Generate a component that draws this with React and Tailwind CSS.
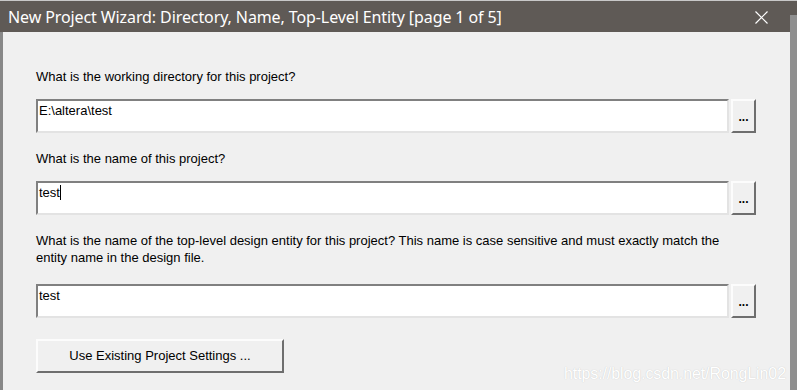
import React from 'react';

const FIELDS = [
  { label: 'What is the working directory for this project?', value: 'E:\\altera\\test' },
  { label: 'What is the name of this project?', value: 'test', caret: true },
  {
    label:
      'What is the name of the top-level design entity for this project? This name is case sensitive and must exactly match the entity name in the design file.',
    value: 'test',
    tall: true,
  },
];

function Field({ label, value, caret, tall }) {
  return (
    <div className="flex flex-col">
      <p className="w-[706px] text-[13px] leading-[17px] text-black">{label}</p>
      <div className={`${tall ? 'mt-[18px]' : 'mt-[14px]'} flex gap-[2px]`}>
        <div className="w-[693px] h-[34px] bg-white border-2 border-t-[#808080] border-l-[#808080] border-b-[#e3e3e3] border-r-[#e3e3e3] px-[1px] pt-[2px] text-[13px] leading-[15px] text-black">
          {value}
          {caret && <span className="inline-block w-px h-[15px] bg-black align-[-3px]" />}
        </div>
        <button className="w-[25px] h-[34px] bg-[#f0f0f0] border-2 border-t-[#fcfcfc] border-l-[#fcfcfc] border-b-[#6e6e6e] border-r-[#6e6e6e] text-[12px] font-bold leading-none text-black pt-[2px]">
          ...
        </button>
      </div>
    </div>
  );
}

export default function App() {
  return (
    <div className="w-[797px] h-[390px] overflow-hidden bg-[#9d9d9d] relative" style={{ fontFamily: '"Liberation Sans", Arial, sans-serif' }}>
      <div className="h-px bg-[#c8c8c8]" />
      <div className="flex h-[389px]">
        <div className="w-[790px] flex flex-col">
          <div className="h-[31px] bg-[#5f5a56] flex items-center justify-between pl-[8px] pr-[22px]">
            <span className="text-white text-[16px] tracking-[-0.1px]" style={{ fontFamily: '"Noto Sans", sans-serif' }}>
              New Project Wizard: Directory, Name, Top-Level Entity [page 1 of 5]
            </span>
            <svg width="13" height="13" viewBox="0 0 13 13" className="mt-[1px]">
              <path d="M0.5 0.5 L12.5 12.5 M12.5 0.5 L0.5 12.5" stroke="#ffffff" strokeWidth="1.2" fill="none" />
            </svg>
          </div>
          <div className="flex flex-1">
            <div className="w-[3px] bg-[#888888]" />
            <div className="flex-1 bg-[#f0f0f0] pl-[33px] pt-[36px] flex flex-col gap-[17px]">
              {FIELDS.map((f) => (
                <Field key={f.label} {...f} />
              ))}
              <button className="w-[248px] h-[34px] bg-[#f0f0f0] border-2 border-t-[#fcfcfc] border-l-[#fcfcfc] border-b-[#6e6e6e] border-r-[#6e6e6e] text-[13px] text-black mt-[4px]">
                Use Existing Project Settings ...
              </button>
            </div>
          </div>
        </div>
        <div className="flex-1 flex flex-col">
          <div className="h-[14px] bg-[#5f5a56]" />
          <div className="flex-1 bg-[#8f8f8f]" />
        </div>
      </div>
      <span className="absolute left-[564px] top-[362px] text-[16px] text-white tracking-[-0.1px]" style={{ textShadow: '0 0 1px #bfbfbf' }}>
        https://blog.csdn.net/RongLin02
      </span>
    </div>
  );
}
